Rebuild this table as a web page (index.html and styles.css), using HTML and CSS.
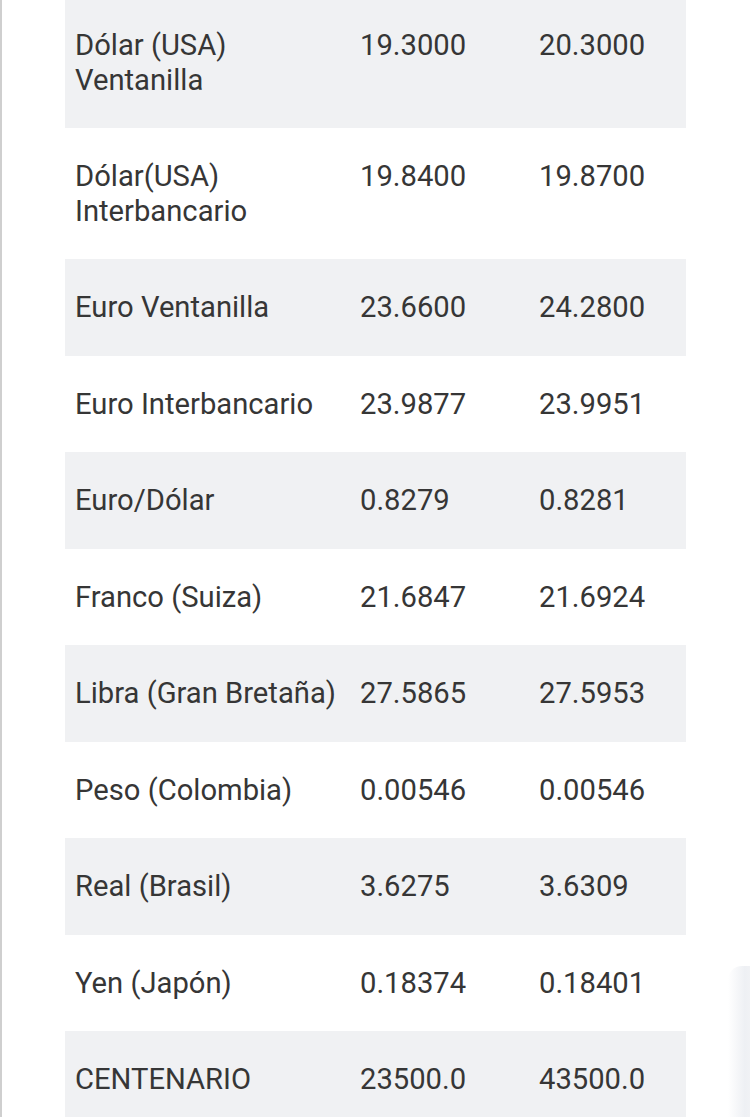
FILE: index.html
```html
<!DOCTYPE html>
<html lang="es">
<head>
<meta charset="utf-8">
<title>Tipo de cambio</title>
<link rel="stylesheet" href="styles.css">
</head>
<body>
<div class="page">
  <table class="rates">
    <colgroup>
      <col class="c-name">
      <col class="c-buy">
      <col class="c-sell">
    </colgroup>
    <tbody>
      <tr class="alt"><td>Dólar (USA)<br>Ventanilla</td><td>19.3000</td><td>20.3000</td></tr>
      <tr><td>Dólar(USA)<br>Interbancario</td><td>19.8400</td><td>19.8700</td></tr>
      <tr class="alt"><td>Euro Ventanilla</td><td>23.6600</td><td>24.2800</td></tr>
      <tr><td>Euro Interbancario</td><td>23.9877</td><td>23.9951</td></tr>
      <tr class="alt"><td>Euro/Dólar</td><td>0.8279</td><td>0.8281</td></tr>
      <tr><td>Franco (Suiza)</td><td>21.6847</td><td>21.6924</td></tr>
      <tr class="alt"><td>Libra (Gran Bretaña)</td><td>27.5865</td><td>27.5953</td></tr>
      <tr><td>Peso (Colombia)</td><td>0.00546</td><td>0.00546</td></tr>
      <tr class="alt"><td>Real (Brasil)</td><td>3.6275</td><td>3.6309</td></tr>
      <tr><td>Yen (Japón)</td><td>0.18374</td><td>0.18401</td></tr>
      <tr class="alt"><td>CENTENARIO</td><td>23500.0</td><td>43500.0</td></tr>
    </tbody>
  </table>
  <div class="edge-shadow"></div>
</div>
</body>
</html>
```
FILE: styles.css
```css
html, body {
  margin: 0;
  padding: 0;
  background: #ffffff;
}

.page {
  position: relative;
  width: 750px;
  height: 1117px;
  overflow: hidden;
  box-sizing: border-box;
  border-left: 2px solid #cfcfcf;
  font-family: Roboto, "Noto Sans", Arial, sans-serif;
  color: #363636;
}

.rates {
  margin: -3px 0 0 63px;
  width: 621px;
  table-layout: fixed;
  border-collapse: collapse;
  border-spacing: 0;
  font-size: 29.2px;
  line-height: 34.5px;
}

.c-name { width: 285px; }
.c-buy { width: 179px; }
.c-sell { width: 157px; }

.rates td {
  padding: 31px 0 31px 10px;
  vertical-align: top;
  white-space: nowrap;
}

.rates tr.alt {
  background: #f0f1f3;
}

.edge-shadow {
  position: absolute;
  left: 726px;
  top: 966px;
  width: 24px;
  height: 151px;
  border-top-left-radius: 14px;
  background: linear-gradient(to right, rgba(236, 238, 242, 0) 0%, #eef0f4 70%, #f1f2f5 100%);
}
```
